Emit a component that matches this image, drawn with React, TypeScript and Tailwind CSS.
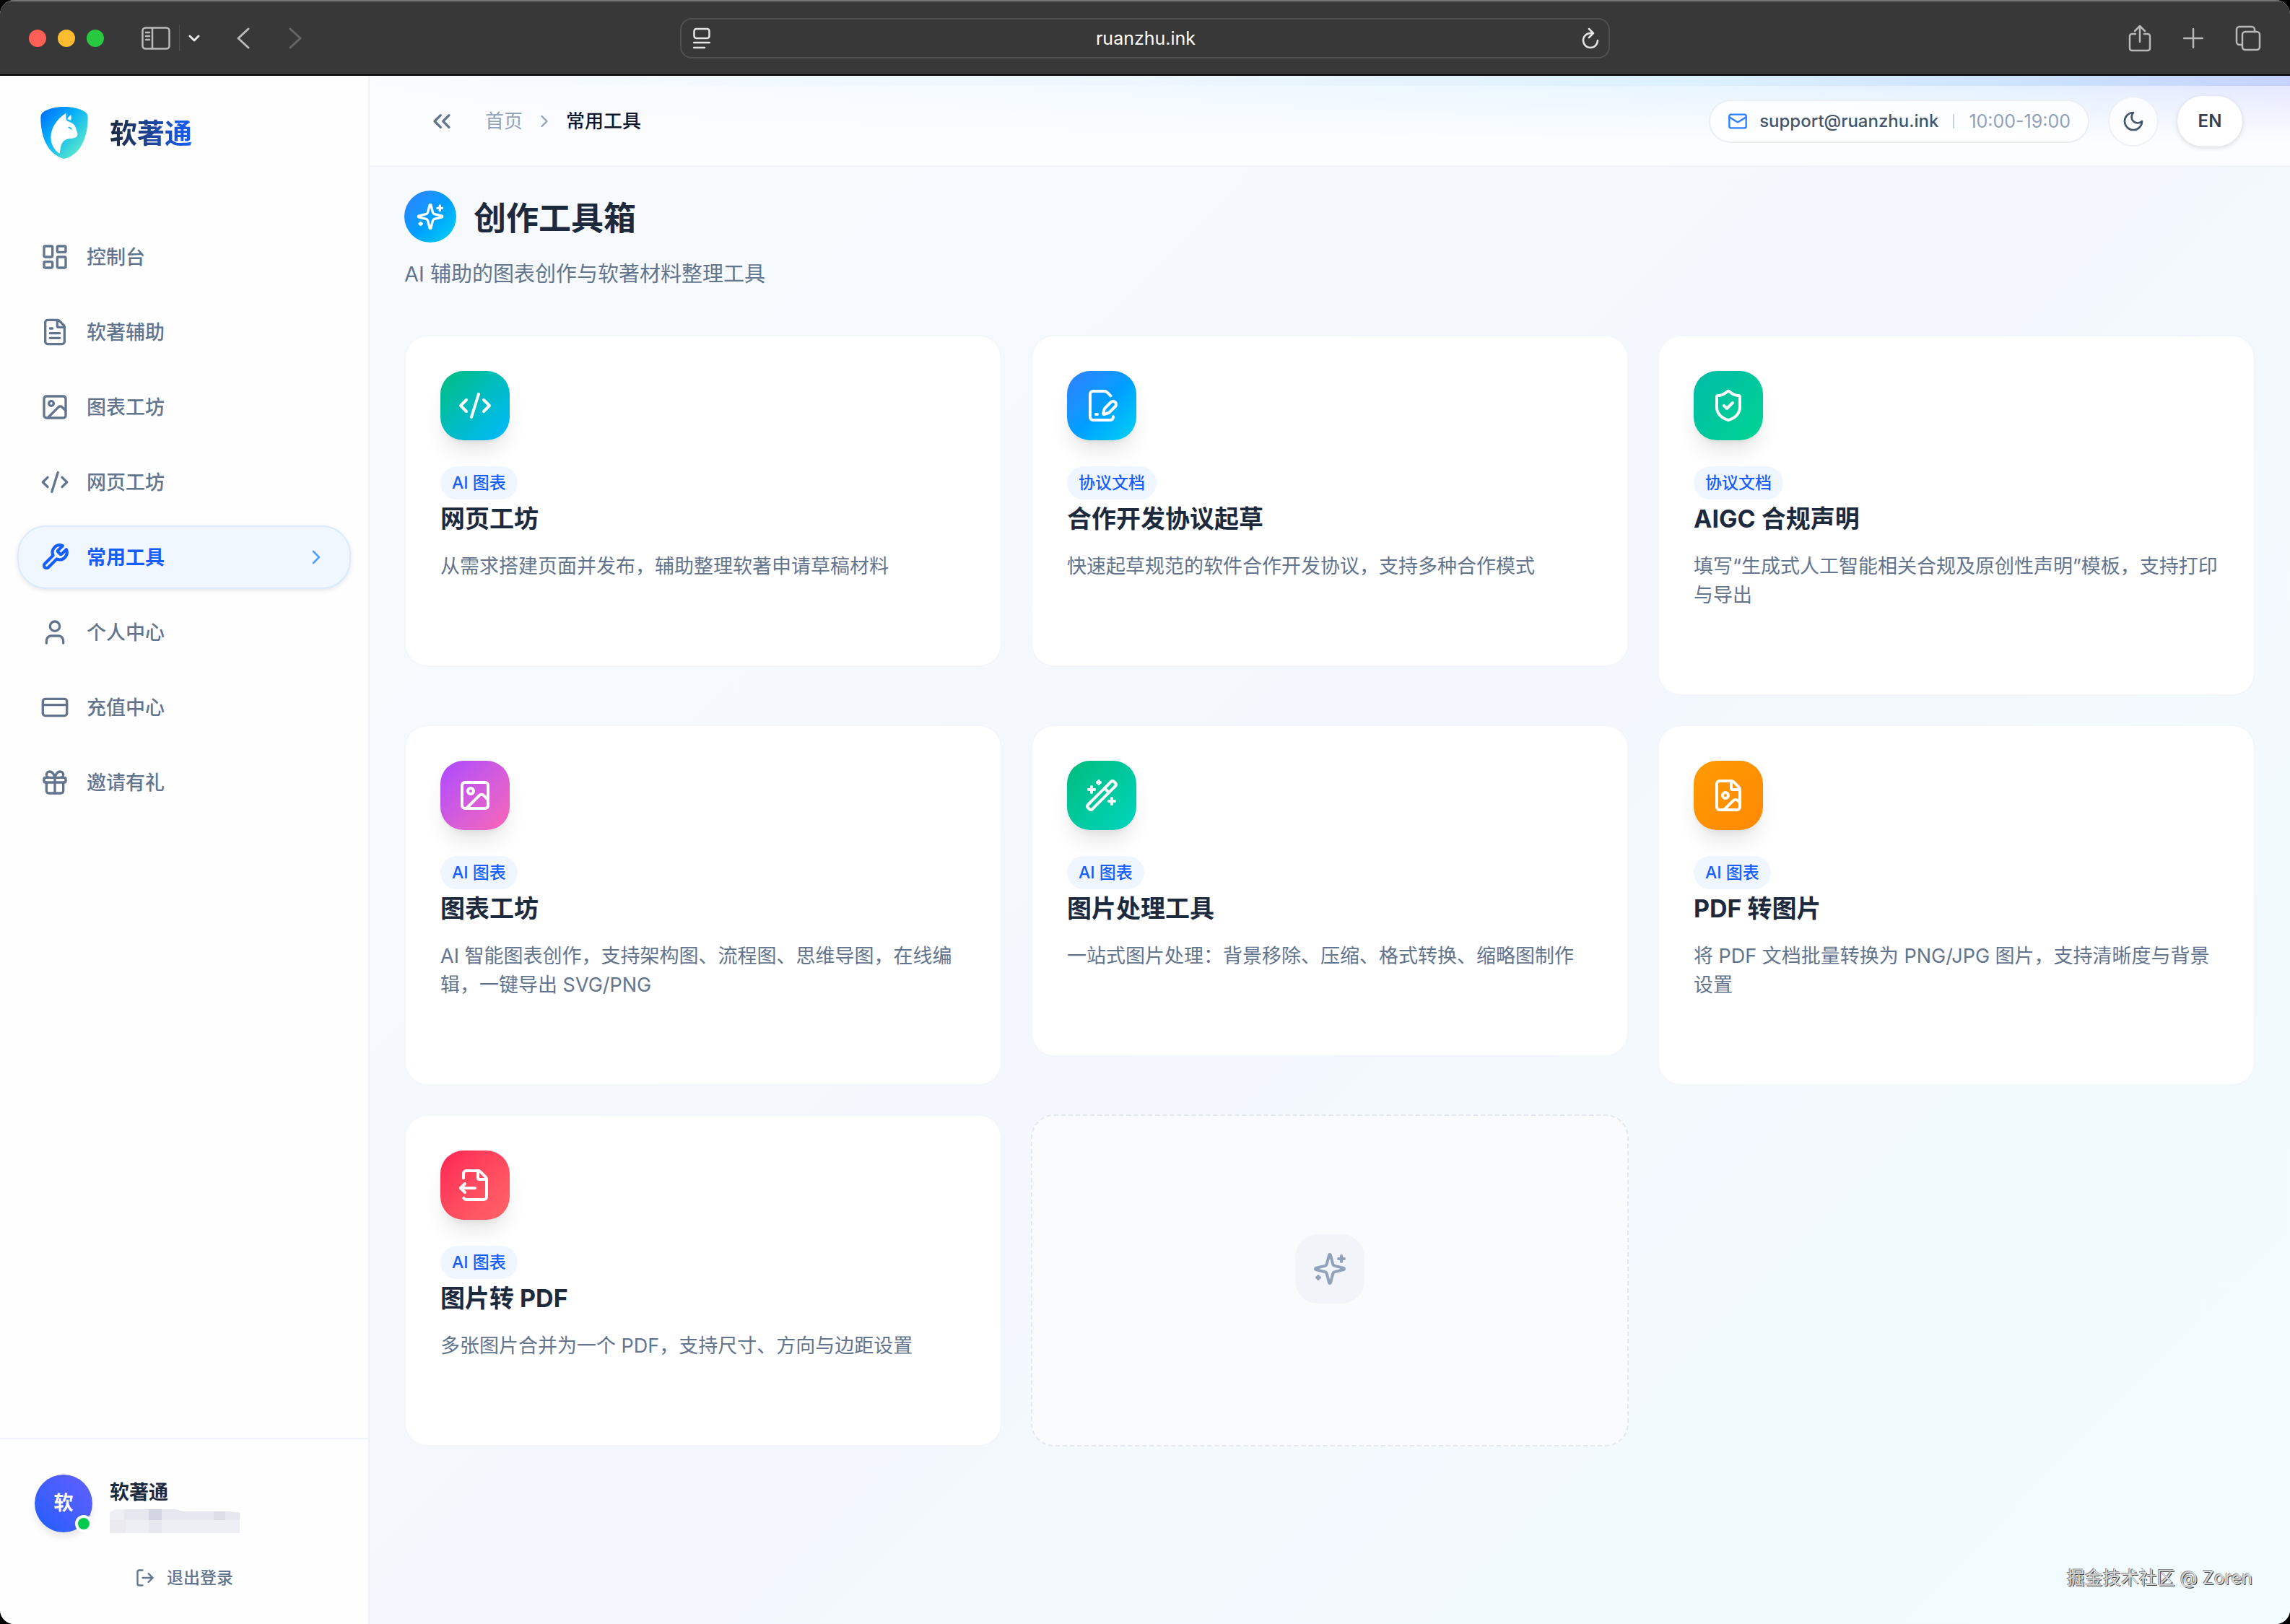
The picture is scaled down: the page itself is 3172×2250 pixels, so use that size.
import type { ReactNode } from "react";
import {
  ChevronRight,
  ChevronsLeft,
  CodeXml,
  CreditCard,
  FileImage,
  FileOutput,
  FilePenLine,
  FileText,
  Gift,
  Image,
  LayoutDashboard,
  LogOut,
  Mail,
  ShieldCheck,
  User,
  WandSparkles,
  type LucideIcon,
} from "lucide-react";
import clsx from "clsx";

type IconType = LucideIcon | typeof Wrench;

const navItems: { label: string; icon: IconType; active?: boolean }[] = [
  { label: "控制台", icon: LayoutDashboard },
  { label: "软著辅助", icon: FileText },
  { label: "图表工坊", icon: Image },
  { label: "网页工坊", icon: CodeXml },
  { label: "常用工具", icon: Wrench, active: true },
  { label: "个人中心", icon: User },
  { label: "充值中心", icon: CreditCard },
  { label: "邀请有礼", icon: Gift },
];

const tools: {
  title: string;
  tag: string;
  desc: string;
  icon: LucideIcon;
  color: string;
}[] = [
  {
    title: "网页工坊",
    tag: "AI 图表",
    desc: "从需求搭建页面并发布，辅助整理软著申请草稿材料",
    icon: CodeXml,
    color: "from-[#00bc7d] to-[#00b8ff]",
  },
  {
    title: "合作开发协议起草",
    tag: "协议文档",
    desc: "快速起草规范的软件合作开发协议，支持多种合作模式",
    icon: FilePenLine,
    color: "from-[#2b7fff] via-[#009dff] to-[#00d3f2]",
  },
  {
    title: "AIGC 合规声明",
    tag: "协议文档",
    desc: "填写“生成式人工智能相关合规及原创性声明”模板，支持打印与导出",
    icon: ShieldCheck,
    color: "from-[#00bba7] to-[#00d492]",
  },
  {
    title: "图表工坊",
    tag: "AI 图表",
    desc: "AI 智能图表创作，支持架构图、流程图、思维导图，在线编辑，一键导出 SVG/PNG",
    icon: Image,
    color: "from-[#ad46ff] to-[#fb64b6]",
  },
  {
    title: "图片处理工具",
    tag: "AI 图表",
    desc: "一站式图片处理：背景移除、压缩、格式转换、缩略图制作",
    icon: WandSparkles,
    color: "from-[#00bc7d] to-[#00d5be]",
  },
  {
    title: "PDF 转图片",
    tag: "AI 图表",
    desc: "将 PDF 文档批量转换为 PNG/JPG 图片，支持清晰度与背景设置",
    icon: FileImage,
    color: "from-[#fe9a00] to-[#ff8904]",
  },
  {
    title: "图片转 PDF",
    tag: "AI 图表",
    desc: "多张图片合并为一个 PDF，支持尺寸、方向与边距设置",
    icon: FileOutput,
    color: "from-[#ff2056] to-[#ff6467]",
  },
];

export default function App() {
  return (
    <div className="min-h-screen bg-black font-['Inter','Noto_Sans_CJK_SC',sans-serif] text-[27px] leading-10">
      <div className="flex min-h-screen flex-col overflow-hidden rounded-[20px] bg-[#f5f9fe]">
        <BrowserBar />
        <div className="flex flex-1">
          <Sidebar />
          <div className="flex min-w-0 flex-1 flex-col bg-[linear-gradient(135deg,#f7fafc_0%,#f4f8fe_50%,#f2fbfd_100%)]">
            <TopBar />
            <Toolbox />
          </div>
        </div>
      </div>
    </div>
  );
}

function BrowserBar() {
  return (
    <div className="flex h-[105px] shrink-0 items-center border-t-2 border-b-2 border-t-[#777] border-b-black bg-[#383838] px-10 text-[#b9b9b9]">
      <div className="flex flex-1 items-center">
        <div className="flex gap-4">
          <span className="size-6 rounded-full bg-[#ff5f57]" />
          <span className="size-6 rounded-full bg-[#febc2e]" />
          <span className="size-6 rounded-full bg-[#28c840]" />
        </div>
        <button aria-label="Sidebar" className="ml-[52px]">
          <Glyph w={40} h={32}>
            <rect x="1.5" y="1.5" width="37" height="29" rx="4" />
            <path d="M15 2v28M6 8h5M6 13h5M6 18h5" />
          </Glyph>
        </button>
        <span className="ml-3 h-9 w-px bg-[#505050]" />
        <button aria-label="Tab groups" className="ml-3 text-[#e6e6e6]">
          <Glyph w={16} h={12} stroke={3}>
            <path d="M2 3l6 6 6-6" />
          </Glyph>
        </button>
        <button aria-label="Back" className="ml-[50px]">
          <Glyph w={20} h={30} stroke={3}>
            <path d="M17 2L3 15l14 13" />
          </Glyph>
        </button>
        <button aria-label="Forward" className="ml-[52px] text-[#666]">
          <Glyph w={20} h={30} stroke={3}>
            <path d="M3 2l14 13L3 28" />
          </Glyph>
        </button>
      </div>
      <div className="flex h-14 w-5/12 items-center justify-between rounded-2xl border-2 border-[#505050] pr-3 pl-4 text-[#e6e6e6]">
        <Glyph w={24} h={30}>
          <rect x="1.5" y="2" width="21" height="13" rx="3" />
          <path d="M1 21h22M1 28h15" />
        </Glyph>
        <span className="text-[25px] text-white">ruanzhu.ink</span>
        <button aria-label="Reload">
          <Glyph w={26} h={30}>
            <path d="M16 8H13a10 10 0 1 0 10 10M11 2l6 6-6 6" />
          </Glyph>
        </button>
      </div>
      <div className="flex flex-1 items-center justify-end gap-11">
        <button aria-label="Share">
          <Glyph w={32} h={38}>
            <path d="M10 13H5a3 3 0 0 0-3 3v17a3 3 0 0 0 3 3h22a3 3 0 0 0 3-3V16a3 3 0 0 0-3-3h-5M16 24V2M9 9l7-7 7 7" />
          </Glyph>
        </button>
        <button aria-label="New tab">
          <Glyph w={28} h={28}>
            <path d="M14 1v26M1 14h26" />
          </Glyph>
        </button>
        <button aria-label="Tabs">
          <Glyph w={36} h={36}>
            <path d="M9 27H6a4 4 0 0 1-4-4V6a4 4 0 0 1 4-4h17a4 4 0 0 1 4 4v3" />
            <rect x="10" y="9" width="24" height="25" rx="4" />
          </Glyph>
        </button>
      </div>
    </div>
  );
}

function Glyph({
  w,
  h,
  stroke = 2.5,
  children,
}: {
  w: number;
  h: number;
  stroke?: number;
  children: ReactNode;
}) {
  return (
    <svg
      width={w}
      height={h}
      viewBox={`0 0 ${w} ${h}`}
      fill="none"
      stroke="currentColor"
      strokeWidth={stroke}
      strokeLinecap="round"
      strokeLinejoin="round"
    >
      {children}
    </svg>
  );
}

function Sidebar() {
  return (
    <aside className="flex w-[512px] shrink-0 flex-col border-r-2 border-[#eff3f8] bg-[#fefefe]">
      <a href="#" className="flex items-center gap-[30px] px-14 pt-[43px]">
        <Logo />
        <span className="bg-linear-to-r from-[#1d293d] to-[#155dfc] bg-clip-text text-[38px] leading-[72px] font-bold text-transparent">
          软著通
        </span>
      </a>
      <nav className="mt-[92px] flex flex-col gap-4 px-6">
        {navItems.map(({ label, icon: Icon, active }) => (
          <a
            key={label}
            href="#"
            className={clsx(
              "flex h-[88px] items-center gap-6 rounded-[40px] border-2 px-[30px]",
              active
                ? "border-blue-100 bg-[#f1f7ff] font-bold text-blue-600 shadow-[0_2px_6px_rgb(0_0_0/0.1)]"
                : "border-transparent font-medium text-slate-500",
            )}
          >
            <Icon size={40} strokeWidth={active ? 2.5 : 2} />
            <span className="flex-1 pt-0.5">{label}</span>
            {active ? <ChevronRight size={32} className="text-blue-400" /> : null}
          </a>
        ))}
      </nav>
      <div className="mt-auto border-t-2 border-[#f1f4f8] px-12 pt-12 pb-9">
        <div className="flex items-center gap-6">
          <div className="relative flex size-20 items-center justify-center rounded-full bg-linear-to-tr from-[#155dfc] to-[#615fff] font-bold text-white shadow-[0_8px_12px_-2px_rgb(0_0_0/0.1)]">
            软
            <span className="absolute right-0 bottom-0 size-6 rounded-full border-4 border-white bg-[#00c950]" />
          </div>
          <div>
            <div className="pt-2 leading-9 font-bold text-slate-800">软著通</div>
            <MaskedAccount />
          </div>
        </div>
        <button className="mt-[34px] flex h-14 w-full items-center justify-center gap-4 text-[23px] font-medium text-slate-500">
          <LogOut size={28} />
          退出登录
        </button>
      </div>
    </aside>
  );
}

function MaskedAccount() {
  return (
    <svg width="180" height="34" viewBox="0 0 180 34" className="mt-1">
      <path d="M0 5L8 1h82l12 3h62l16 2v28H0z" fill="#eeeff4" />
      <path d="M20 1h70l12 3h62l16 2v10H20z" fill="#e5e6ee" />
      <path d="M54 1h18v15H54z" fill="#d3d5e2" />
      <path d="M54 16h18v18H54z" fill="#e6e7ef" />
      <path d="M144 4h16v12h-16z" fill="#dddee6" />
      <path d="M0 16h22v18H0z" fill="#ebebef" />
    </svg>
  );
}

function TopBar() {
  return (
    <header className="border-b-2 border-[#f1f4f8] bg-[linear-gradient(to_bottom,transparent_0%,#fcfdff_75%),linear-gradient(to_right,#fafcff_0%,#f3f9ff_30%,#e8f6ff_60%,#e0efff_85%,#e2e5ff_100%)]">
      <div className="h-3.5 bg-[linear-gradient(to_right,transparent_0%,#eef7ff_40%,#dcf0ff_70%,#cbe1ff_88%,#c6d1ff_100%)]" />
      <div className="flex h-[98px] items-center justify-between pr-[66px] pl-20">
        <div className="flex items-center text-[26px]">
          <button aria-label="Collapse" className="text-slate-500">
            <ChevronsLeft size={40} />
          </button>
          <a href="#" className="ml-10 text-slate-400">
            首页
          </a>
          <ChevronRight size={28} className="mx-4 text-slate-400" />
          <span className="font-medium text-slate-900">常用工具</span>
        </div>
        <div className="flex items-center gap-[26px] text-[26px]">
          <div className="flex h-[60px] items-center rounded-full border-2 border-slate-200/70 bg-white/80 px-6">
            <Mail size={28} className="text-blue-500" />
            <a
              href="mailto:support@ruanzhu.ink"
              className="ml-4 text-[24px] font-medium text-slate-600"
            >
              support@ruanzhu.ink
            </a>
            <span className="mx-5 h-5 w-0.5 bg-slate-300" />
            <span className="text-[25px] text-slate-400">10:00-19:00</span>
          </div>
          <button
            aria-label="Theme"
            className="flex size-[70px] items-center justify-center rounded-full border-2 border-slate-200/60 bg-white/80 text-slate-600"
          >
            <Moon />
          </button>
          <button className="h-[70px] w-[90px] rounded-full bg-white text-[24px] font-semibold text-slate-700 shadow-[0_2px_6px_rgb(0_0_0/0.15)]">
            EN
          </button>
        </div>
      </div>
      <div className="h-3" />
    </header>
  );
}

function Toolbox() {
  return (
    <main className="flex flex-1 flex-col px-12 pt-[33px]">
      <div className="flex items-center gap-6">
        <span className="flex size-[72px] items-center justify-center rounded-full bg-linear-to-br from-[#2b7fff] via-[#009dff] to-[#00d3f2] text-white">
          <Sparkles size={40} />
        </span>
        <h1 className="pt-1.5 text-[45px] leading-[66px] font-bold text-slate-800">
          创作工具箱
        </h1>
      </div>
      <p className="mt-6 text-[29px] text-slate-500">
        AI 辅助的图表创作与软著材料整理工具
      </p>
      <div className="mt-16 grid grid-cols-3 items-start gap-10">
        {tools.map((tool) => (
          <ToolCard key={tool.title} {...tool} />
        ))}
        <div className="flex h-[460px] items-center justify-center rounded-[32px] border-2 border-dashed border-slate-200 bg-[#f9fbfc] pb-8">
          <span className="flex size-24 items-center justify-center rounded-[32px] bg-slate-100 text-slate-400">
            <Sparkles size={48} />
          </span>
        </div>
      </div>
      <div className="mt-auto pr-1 pb-11 text-right text-[25px] text-[#d8dadb] [text-shadow:-1px_-1px_0_#8a8a8a,1px_1px_0_#3a3a3a]">
        掘金技术社区 @ Zoren
      </div>
    </main>
  );
}

function ToolCard({
  title,
  tag,
  desc,
  icon: Icon,
  color,
}: (typeof tools)[number]) {
  return (
    <a
      href="#"
      className="block rounded-[32px] border-2 border-slate-100/60 bg-white bg-clip-padding px-12 pt-12 pb-[117px]"
    >
      <span
        className={clsx(
          "flex size-24 items-center justify-center rounded-[32px] bg-linear-to-br text-white shadow-[0_20px_30px_-6px_rgb(0_0_0/0.1),0_8px_12px_-8px_rgb(0_0_0/0.1)]",
          color,
        )}
      >
        <Icon size={48} />
      </span>
      <span className="mt-9 block w-fit rounded-full bg-blue-50 px-4 text-[23px] leading-[46px] font-medium text-blue-600">
        {tag}
      </span>
      <h2 className="mt-[3px] text-[34px] leading-[48px] font-bold text-slate-800">
        {title}
      </h2>
      <p className="mt-[22px] text-slate-500">{desc}</p>
    </a>
  );
}

function Wrench({ size, strokeWidth = 2 }: { size: number; strokeWidth?: number }) {
  return (
    <svg
      width={size}
      height={size}
      viewBox="0 0 24 24"
      fill="none"
      stroke="currentColor"
      strokeWidth={strokeWidth}
      strokeLinecap="round"
      strokeLinejoin="round"
    >
      <path d="M14.7 6.3a1 1 0 0 0 0 1.4l1.6 1.6a1 1 0 0 0 1.4 0l3.77-3.77a6 6 0 0 1-7.94 7.94l-6.91 6.91a2.12 2.12 0 0 1-3-3l6.91-6.91a6 6 0 0 1 7.94-7.94l-3.76 3.76z" />
    </svg>
  );
}

function Moon() {
  return (
    <svg
      width="32"
      height="32"
      viewBox="0 0 24 24"
      fill="none"
      stroke="currentColor"
      strokeWidth="2"
      strokeLinecap="round"
      strokeLinejoin="round"
    >
      <path d="M12 3a6 6 0 0 0 9 9 9 9 0 1 1-9-9Z" />
    </svg>
  );
}

function Sparkles({ size }: { size: number }) {
  return (
    <svg
      width={size}
      height={size}
      viewBox="0 0 24 24"
      fill="none"
      stroke="currentColor"
      strokeWidth="2"
      strokeLinecap="round"
      strokeLinejoin="round"
    >
      <path d="M9.937 15.5A2 2 0 0 0 8.5 14.063l-6.135-1.582a.5.5 0 0 1 0-.962L8.5 9.936A2 2 0 0 0 9.937 8.5l1.582-6.135a.5.5 0 0 1 .963 0L14.063 8.5A2 2 0 0 0 15.5 9.937l6.135 1.581a.5.5 0 0 1 0 .964L15.5 14.063a2 2 0 0 0-1.437 1.437l-1.582 6.135a.5.5 0 0 1-.963 0z" />
      <path d="M20 3v4M22 5h-4M4 17v2M5 18H3" />
    </svg>
  );
}

function Logo() {
  return (
    <svg width="66" height="72" viewBox="0 0 198 216">
      <defs>
        <linearGradient id="shield" x1="0" y1="0" x2="1" y2="1">
          <stop offset="0" stopColor="#0066ff" />
          <stop offset="0.4" stopColor="#06b0fa" />
          <stop offset="0.8" stopColor="#4fe3cf" />
          <stop offset="1" stopColor="#5ff0d0" />
        </linearGradient>
      </defs>
      <path
        d="M99 0C133 0 165 8 184 20C194 26 197 34 197 46C197 92 188 134 166 168C146 197 120 212 99 216C78 212 52 197 32 168C10 134 1 92 1 46C1 34 4 26 14 20C33 8 65 0 99 0Z"
        fill="url(#shield)"
      />
      <path
        d="M106 26C72 48 44 84 43 126C43 158 60 182 80 194C84 170 84 148 104 137C120 129 146 135 153 120C156 114 154 108 152 104C148 92 146 78 134 70C126 62 112 62 108 54C106 46 107 36 106 26Z"
        fill="white"
      />
      <path d="M127 34C128 42 130 48 126 56L112 52C115 44 120 38 127 34Z" fill="white" />
      <path d="M114 84C122 81 130 86 132 96C126 94 120 91 114 84Z" fill="#17c3ee" />
    </svg>
  );
}
